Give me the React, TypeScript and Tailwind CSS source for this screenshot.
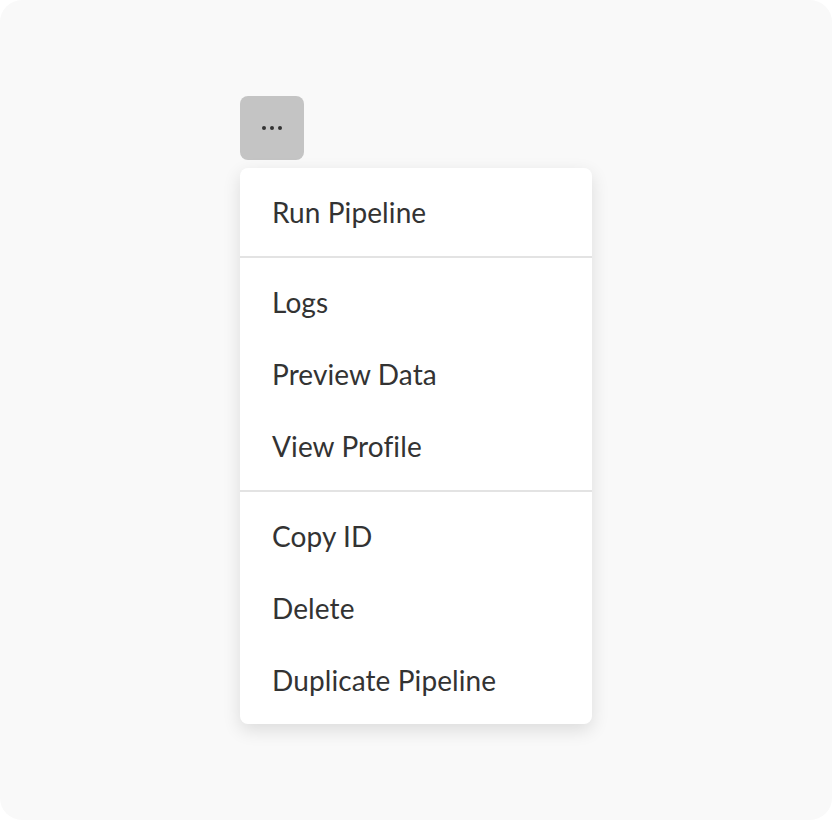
import React from 'react';

const sections: string[][] = [
  ['Run Pipeline'],
  ['Logs', 'Preview Data', 'View Profile'],
  ['Copy ID', 'Delete', 'Duplicate Pipeline'],
];

const App: React.FC = () => {
  return (
    <div className="w-[832px] h-[820px] bg-white">
      <div
        className="w-full h-full rounded-[22px] bg-[#f9f9f9] pl-[240px] pt-[96px]"
        style={{ fontFamily: 'Lato, "Noto Sans", sans-serif' }}
      >
        <button className="w-16 h-16 rounded-lg bg-[#c4c4c4] flex items-center justify-center gap-1">
          <span className="w-1 h-1 rounded-full bg-[#333333]" />
          <span className="w-1 h-1 rounded-full bg-[#333333]" />
          <span className="w-1 h-1 rounded-full bg-[#333333]" />
        </button>

        <div className="mt-2 w-[352px] bg-white rounded-lg shadow-[0_6px_18px_rgba(0,0,0,0.12)]">
          {sections.map((items, i) => (
            <div key={i} className={i > 0 ? 'border-t-2 border-[#e3e3e3]' : ''}>
              <ul className="py-2">
                {items.map(label => (
                  <li
                    key={label}
                    className="h-[72px] flex items-center pl-8 text-[28px] tracking-[0.1px] text-[#333333]"
                  >
                    {label}
                  </li>
                ))}
              </ul>
            </div>
          ))}
        </div>
      </div>
    </div>
  );
};

export default App;
